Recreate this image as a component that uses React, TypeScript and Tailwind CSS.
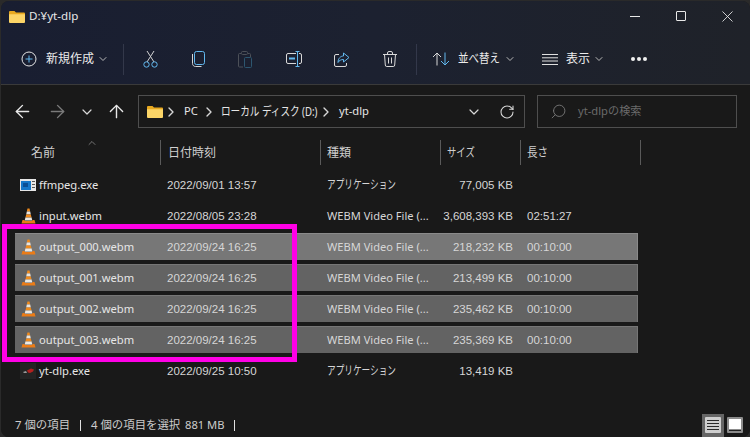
import { ArrowLeft, ArrowRight, ArrowUp, ChevronDown, ChevronRight, ChevronUp, RotateCw, Search, X } from "lucide-react";

type FileRow = {
    name: string;
    date: string;
    type: string;
    size: string;
    length?: string;
    icon: "exe" | "vlc" | "ytdlp";
    selected?: "first" | "rest";
};

const files: FileRow[] = [
    { name: "ffmpeg.exe", date: "2022/09/01 13:57", type: "アプリケーション", size: "77,005 KB", icon: "exe" },
    { name: "input.webm", date: "2022/08/05 23:28", type: "WEBM Video File (...", size: "3,608,393 KB", length: "02:51:27", icon: "vlc" },
    { name: "output_000.webm", date: "2022/09/24 16:25", type: "WEBM Video File (...", size: "218,232 KB", length: "00:10:00", icon: "vlc", selected: "first" },
    { name: "output_001.webm", date: "2022/09/24 16:25", type: "WEBM Video File (...", size: "213,499 KB", length: "00:10:00", icon: "vlc", selected: "rest" },
    { name: "output_002.webm", date: "2022/09/24 16:25", type: "WEBM Video File (...", size: "235,462 KB", length: "00:10:00", icon: "vlc", selected: "rest" },
    { name: "output_003.webm", date: "2022/09/24 16:25", type: "WEBM Video File (...", size: "235,369 KB", length: "00:10:00", icon: "vlc", selected: "rest" },
    { name: "yt-dlp.exe", date: "2022/09/25 10:50", type: "アプリケーション", size: "13,419 KB", icon: "ytdlp" },
];

const FolderIcon = () => (
    <svg width="16" height="13" viewBox="0 0 16 13">
        <path d="M0 2a1 1 0 0 1 1-1h4.500l1.500 1.500h8a1 1 0 0 1 1 1V5H0z" fill="#e8a920" />
        <path d="M0 4.200h16V12a1 1 0 0 1-1 1H1a1 1 0 0 1-1-1z" fill="#fcd567" />
    </svg>
);

const VlcIcon = () => (
    <svg width="15" height="16" viewBox="0 0 15 16">
        <path d="M6.500.5h2l.7 3.100H5.800z" fill="#f08a1c" />
        <path d="M5.800 3.600h3.400l.6 2.800H5.200z" fill="#e8e4de" />
        <path d="M5.200 6.400h4.600l.8 3H4.400z" fill="#f08a1c" />
        <path d="M4.400 9.400h6.200l.7 3H3.700z" fill="#ece8e2" />
        <path d="M1.500 12h2.200v1h7.600v-1h2.200l1 3.500H.5z" fill="#ea7c18" />
    </svg>
);

const ExeIcon = () => (
    <svg width="16" height="12" viewBox="0 0 16 12">
        <rect width="16" height="12" fill="#e6e6e6" />
        <rect x="1" y="2" width="10" height="9" fill="#1677c9" />
        <rect x="3" y="4" width="5" height="4" fill="#0a4f95" />
        <path d="M12 2h3v1h-3zM12 5h3v1h-3zM12 8h3v1h-3z" fill="#555" />
    </svg>
);

const YtdlpIcon = () => (
    <svg width="16" height="16" viewBox="0 0 16 16">
        <rect width="16" height="16" fill="#242424" />
        <path d="M3 9l3-1 1 2-3 0z" fill="#9a9a9a" />
        <path d="M7 7.500l4-2 3 1-1 2-3 1.500-2-.5z" fill="#b3201f" />
    </svg>
);

const Toolbar = () => (
    <div className="flex items-center h-[50px] text-[12px] text-[#ececec]">
        <div className="w-[122px] flex items-center h-[31px] shrink-0">
            <svg className="ml-[20px]" width="16" height="16" viewBox="0 0 16 16" fill="none">
                <circle cx="8" cy="8" r="7" stroke="#e4e4e4" />
                <path d="M8 4.500v7M4.500 8h7" stroke="#62b8ee" />
            </svg>
            <span className="ml-[9px]">新規作成</span>
            <ChevronDown className="ml-[3px]" size={12} color="#b8b8b8" />
        </div>
        <div className="w-px h-[31px] bg-[#33384a] shrink-0" />
        {/* cut */}
        <svg className="ml-[19px]" width="15" height="17" viewBox="0 0 15 17" fill="none">
            <path d="M4 11L11 0M11 11L4 0" stroke="#d4d4d4" />
            <circle cx="3.500" cy="13.500" r="2.700" stroke="#62b8ee" />
            <circle cx="11.500" cy="13.500" r="2.700" stroke="#62b8ee" />
        </svg>
        {/* copy */}
        <svg className="ml-[34px]" width="13" height="16" viewBox="0 0 13 16" fill="none">
            <rect x="2.500" y=".5" width="10" height="13" rx="2" stroke="#62b8ee" />
            <path d="M.5 3v9.500c0 1.700 1.300 3 3 3h6" stroke="#d4d4d4" />
        </svg>
        {/* paste, disabled */}
        <svg className="ml-[33px]" width="14" height="17" viewBox="0 0 14 17" fill="none">
            <path d="M3 2.500H1.500a1 1 0 0 0-1 1V15a1 1 0 0 0 1 1H5M10 2.500h1.500a1 1 0 0 1 1 1V6" stroke="#4c5058" />
            <rect x="3.500" y=".5" width="6" height="3" rx="1" stroke="#4c5058" />
            <rect x="6.500" y="6.500" width="7" height="10" rx="1" stroke="#2d5670" />
        </svg>
        {/* rename */}
        <svg className="ml-[34px]" width="16" height="16" viewBox="0 0 16 16" fill="none">
            <path d="M10 2.500H2a1.500 1.500 0 0 0-1.500 1.500v7A1.500 1.500 0 0 0 2 12.500h8M13 2.500h1a1.500 1.500 0 0 1 1.500 1.500v7a1.500 1.500 0 0 1-1.500 1.500h-1" stroke="#d8d8d8" />
            <path d="M3 7.500h6" stroke="#62b8ee" strokeWidth="2" />
            <path d="M11.500 1v14M9.500.5h4M9.500 15.500h4" stroke="#62b8ee" />
        </svg>
        {/* share */}
        <svg className="ml-[32px]" width="16" height="15" viewBox="0 0 16 15" fill="none">
            <path d="M5 2.500H2A1.500 1.500 0 0 0 .5 4v9A1.500 1.500 0 0 0 2 14.500h9a1.500 1.500 0 0 0 1.500-1.500v-2" stroke="#d8d8d8" />
            <path d="M9.500 1l5.500 4.500L9.500 10V7.500C7 7.500 5 8.500 4 10.500c0-4 2.500-6.500 5.500-6.500z" stroke="#62b8ee" />
        </svg>
        {/* delete */}
        <svg className="ml-[33px]" width="14" height="16" viewBox="0 0 14 16" fill="none" stroke="#d8d8d8">
            <path d="M0 3.500h14M4.500 3.500V2a1.500 1.500 0 0 1 1.500-1.500h2A1.500 1.500 0 0 1 9.500 2v1.500M1.500 3.500l.8 10.500a1.500 1.500 0 0 0 1.500 1.500h6.400a1.500 1.500 0 0 0 1.500-1.500l.8-10.500M5.500 6.500v6M8.500 6.500v6" />
        </svg>
        <div className="ml-[19px] w-px h-[31px] bg-[#33384a] shrink-0" />
        {/* sort arrows */}
        <svg className="ml-[15px]" width="18" height="14" viewBox="0 0 18 14" fill="none">
            <path d="M5 13.500V1M1 5l4-4 4 4" stroke="#d8d8d8" />
            <path d="M13 .5V13M9 9l4 4 4-4" stroke="#62b8ee" />
        </svg>
        <div className="ml-[8px] w-[42px] shrink-0">
            <span className="inline-block origin-left scale-x-[.875] whitespace-nowrap">並べ替え</span>
        </div>
        <ChevronDown className="ml-[4px]" size={12} color="#b8b8b8" />
        <svg className="ml-[26px]" width="16" height="11" viewBox="0 0 16 11" stroke="#e0e0e0">
            <path d="M0 .5h16M0 3.800h16M0 7h16M0 10.500h16" />
        </svg>
        <span className="ml-[8px]">表示</span>
        <ChevronDown className="ml-[3px]" size={12} color="#b8b8b8" />
        <div className="ml-[26px] flex gap-[2px]">
            <div className="w-[4px] h-[4px] rounded-full bg-[#f0f0f0]" />
            <div className="w-[4px] h-[4px] rounded-full bg-[#f0f0f0]" />
            <div className="w-[4px] h-[4px] rounded-full bg-[#f0f0f0]" />
        </div>
    </div>
);

const NavBar = () => (
    <div className="flex items-center h-[54px] border-t border-[#3a3a3a] bg-[#191919] shrink-0">
        <ArrowLeft className="ml-[11px]" size={21} color="#e8e8e8" strokeWidth={1.6} />
        <ArrowRight className="ml-[14px]" size={21} color="#7a7a7a" strokeWidth={1.6} />
        <ChevronDown className="ml-[11px]" size={16} color="#d8d8d8" strokeWidth={1.8} />
        <ArrowUp className="ml-[11px]" size={21} color="#e8e8e8" strokeWidth={1.6} />
        <div className="ml-[11px] w-[387px] h-[33px] border border-[#4e4e4e] flex items-center text-[11.2px] text-[#e6e6e6] shrink-0">
            <div className="ml-[8px]"><FolderIcon /></div>
            <ChevronRight size={16} color="#d8d8d8" strokeWidth={2} />
            <span className="ml-[5px] w-[14px]">PC</span>
            <ChevronRight className="ml-[3px]" size={16} color="#d8d8d8" strokeWidth={2} />
            <div className="ml-[4px] w-[94px] shrink-0 text-[12px]">
                <span className="inline-block origin-left scale-x-[.8] whitespace-nowrap">ローカル ディスク (D:)</span>
            </div>
            <ChevronRight className="ml-[3px]" size={16} color="#d8d8d8" strokeWidth={2} />
            <span className="ml-[5px]">yt-dlp</span>
            <ChevronDown className="ml-auto" size={16} color="#d8d8d8" strokeWidth={1.8} />
            <RotateCw className="ml-[17px] mr-[9px]" size={16} color="#d8d8d8" strokeWidth={1.6} />
        </div>
        <div className="ml-[12px] w-[200px] h-[33px] border border-[#4e4e4e] flex items-center text-[11.2px] text-[#6a6a6a] shrink-0">
            <Search className="ml-[12px] -scale-x-100" size={17} color="#777777" strokeWidth={1.3} />
            <span className="ml-[11px]">yt-dlpの検索</span>
        </div>
    </div>
);

const Row = ({ file }: { file: FileRow }) => {
    const bg =
        file.selected === "first" ? "bg-[#777777] border-[#8a8a8a]" : file.selected === "rest" ? "bg-[#636363] border-[#767676]" : "border-transparent";
    return (
        <div className={`ml-[14px] w-[623px] h-[27px] mb-[4px] flex items-center border-t border-r ${bg} text-[11.2px] text-[#d6d6d6] whitespace-nowrap`}>
            <div className="w-[5px] shrink-0" />
            <div className="w-[16px] flex justify-center shrink-0">
                {file.icon === "exe" && <ExeIcon />}
                {file.icon === "vlc" && <VlcIcon />}
                {file.icon === "ytdlp" && <YtdlpIcon />}
            </div>
            <div className="ml-[3px] w-[128px] shrink-0 text-[#e6e6e6]">{file.name}</div>
            <div className="w-[160px] shrink-0 pt-px font-['Liberation_Sans',sans-serif] text-[11.5px]">{file.date}</div>
            <div className="w-[100px] shrink-0">
                {file.type === "アプリケーション" ? (
                    <span className="inline-block origin-left scale-x-[.72] text-[12px]">{file.type}</span>
                ) : (
                    <span className="text-[11.1px]">{file.type}</span>
                )}
            </div>
            <div className="w-[86px] shrink-0 pt-px text-right font-['Liberation_Sans',sans-serif] text-[11.5px]">{file.size}</div>
            <div className="ml-[14px] pt-px font-['Liberation_Sans',sans-serif] text-[11.5px]">{file.length}</div>
        </div>
    );
};

const App = () => {
    return (
        <div className="relative w-[750px] h-[437px] overflow-hidden bg-[#2a2a2a] font-['Noto_Sans','Noto_Sans_CJK_JP',sans-serif]">
            <div className="w-[749px] h-[436px] ml-px mt-px rounded-[8px] overflow-hidden bg-[#191919] flex flex-col">
                <div className="bg-gradient-to-r from-[#191e31] via-[#1c2130] to-[#1f2229] shrink-0">
                    <div className="flex items-center h-[33px] pb-[3px]">
                        <div className="ml-[8px]"><FolderIcon /></div>
                        <span className="ml-[4px] text-[11.6px] text-[#e8e8e8]">D:¥yt-dlp</span>
                        <div className="ml-auto w-[46px] flex justify-center">
                            <div className="w-[10px] h-px bg-[#e8e8e8]" />
                        </div>
                        <div className="w-[46px] flex justify-center">
                            <div className="w-[10px] h-[10px] border border-[#e8e8e8] rounded-[1px]" />
                        </div>
                        <div className="w-[46px] flex justify-center">
                            <X size={19} color="#e8e8e8" strokeWidth={1.1} />
                        </div>
                    </div>
                    <Toolbar />
                </div>
                <NavBar />
                <div className="flex-1 flex flex-col bg-[#191919]">
                    <div className="relative flex items-center mt-[2px] h-[25px] text-[12px] text-[#d0d0d0]">
                        <div className="w-[160px] pl-[30px] h-[25px] flex items-center border-r border-[#5a5a5a] shrink-0">名前</div>
                        <div className="w-[160px] pl-[7px] h-[25px] flex items-center border-r border-[#5a5a5a] shrink-0">日付時刻</div>
                        <div className="w-[120px] pl-[6px] h-[25px] flex items-center border-r border-[#5a5a5a] shrink-0">種類</div>
                        <div className="w-[80px] pl-[6px] h-[25px] flex items-center border-r border-[#5a5a5a] shrink-0">
                            <span className="inline-block origin-left scale-x-[.78]">サイズ</span>
                        </div>
                        <div className="w-[120px] pl-[6px] h-[25px] flex items-center border-r border-[#5a5a5a] shrink-0">
                            <span className="inline-block origin-left scale-x-[.875]">長さ</span>
                        </div>
                        <ChevronUp className="absolute left-[85px] -top-[3px]" size={12} color="#b0b0b0" strokeWidth={1.2} />
                    </div>
                    <div className="mt-[6px]">
                        {files.map((file) => <Row key={file.name} file={file} />)}
                    </div>
                    <div className="mt-auto h-[24px] flex items-center text-[12px] text-[#cccccc]">
                        <span className="ml-[14px] w-[65px] shrink-0 text-[11.4px]">7 個の項目</span>
                        <div className="w-px h-[11px] bg-[#e0e0e0]" />
                        <span className="ml-[10px] w-[94px] shrink-0 text-[11.4px]">4 個の項目を選択</span>
                        <span className="text-[11.2px] w-[49px] shrink-0">881 MB</span>
                        <div className="w-px h-[11px] bg-[#e0e0e0]" />
                        <div className="ml-auto w-[22px] h-[23px] bg-[#666666] flex items-center justify-center">
                            <svg width="16" height="16" viewBox="0 0 16 16">
                                <rect width="16" height="16" rx="1" fill="#cfcfcf" />
                                <path d="M2 3.500h12M2 6.500h12M2 9.500h12M2 12.500h12" stroke="#2a2a2a" />
                            </svg>
                        </div>
                        <div className="ml-[3px] mr-[7px] w-[16px] h-[16px] rounded-[1px] bg-[#8c8c8c] flex flex-col p-[2px]">
                            <div className="flex-1 bg-white" />
                            <div className="h-[1px] mt-[1px] bg-[#222222]" />
                        </div>
                    </div>
                </div>
            </div>
            <div className="absolute left-[2px] top-[224px] w-[295px] h-[138px] border-[5px] border-[#ff00e6]" />
        </div>
    );
};

export default App;
